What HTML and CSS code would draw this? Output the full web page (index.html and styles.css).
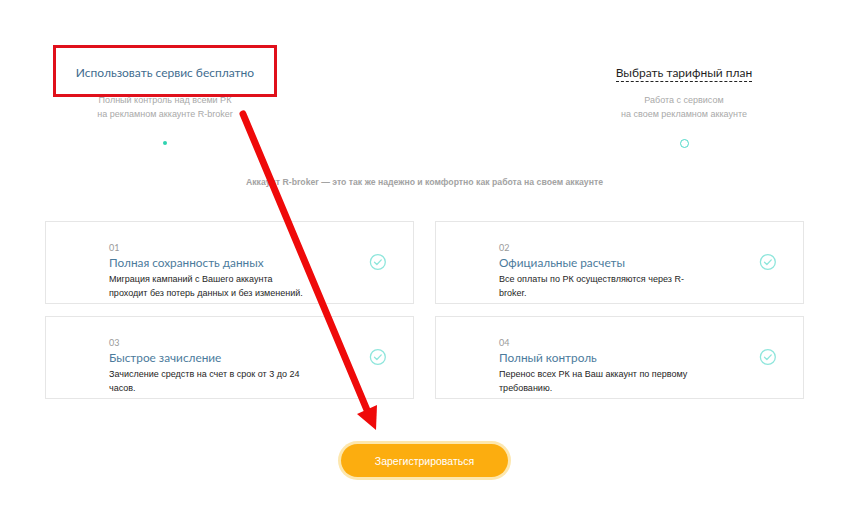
FILE: index.html
```html
<!DOCTYPE html>
<html lang="ru">
<head>
<meta charset="utf-8">
<title>R-broker</title>
<link rel="stylesheet" href="styles.css">
</head>
<body>
<div class="page">
  <section class="options">
    <div class="option">
      <div class="option-title">Использовать сервис бесплатно</div>
      <div class="option-sub">Полный контроль над всеми РК<br>на рекламном аккаунте R-broker</div>
      <div class="marker"><span class="dot"></span></div>
    </div>
    <div class="option">
      <div class="option-title"><span class="dashed">Выбрать тарифный план</span></div>
      <div class="option-sub">Работа с сервисом<br>на своем рекламном аккаунте</div>
      <div class="marker"><span class="ring"></span></div>
    </div>
  </section>

  <p class="lead">Аккаунт R-broker — это так же надежно и комфортно как работа на своем аккаунте</p>

  <section class="cards">
    <div class="card">
      <div class="card-body">
        <div class="num">01</div>
        <div class="card-title">Полная сохранность данных</div>
        <div class="card-text">Миграция кампаний с Вашего аккаунта проходит без потерь данных и без изменений.</div>
      </div>
      <svg class="check" viewBox="0 0 18 18"><circle cx="9" cy="9" r="7.6" fill="none" stroke="#8ee6dc" stroke-width="1.3"/><path d="M5.6 9.3 L8 11.5 L12.5 6.8" fill="none" stroke="#8ee6dc" stroke-width="1.3" stroke-linecap="round" stroke-linejoin="round"/></svg>
    </div>
    <div class="card">
      <div class="card-body">
        <div class="num">02</div>
        <div class="card-title">Официальные расчеты</div>
        <div class="card-text">Все оплаты по РК осуществляются через R-broker.</div>
      </div>
      <svg class="check" viewBox="0 0 18 18"><circle cx="9" cy="9" r="7.6" fill="none" stroke="#8ee6dc" stroke-width="1.3"/><path d="M5.6 9.3 L8 11.5 L12.5 6.8" fill="none" stroke="#8ee6dc" stroke-width="1.3" stroke-linecap="round" stroke-linejoin="round"/></svg>
    </div>
    <div class="card">
      <div class="card-body">
        <div class="num">03</div>
        <div class="card-title">Быстрое зачисление</div>
        <div class="card-text">Зачисление средств на счет в срок от 3 до 24 часов.</div>
      </div>
      <svg class="check" viewBox="0 0 18 18"><circle cx="9" cy="9" r="7.6" fill="none" stroke="#8ee6dc" stroke-width="1.3"/><path d="M5.6 9.3 L8 11.5 L12.5 6.8" fill="none" stroke="#8ee6dc" stroke-width="1.3" stroke-linecap="round" stroke-linejoin="round"/></svg>
    </div>
    <div class="card">
      <div class="card-body">
        <div class="num">04</div>
        <div class="card-title">Полный контроль</div>
        <div class="card-text">Перенос всех РК на Ваш аккаунт по первому требованию.</div>
      </div>
      <svg class="check" viewBox="0 0 18 18"><circle cx="9" cy="9" r="7.6" fill="none" stroke="#8ee6dc" stroke-width="1.3"/><path d="M5.6 9.3 L8 11.5 L12.5 6.8" fill="none" stroke="#8ee6dc" stroke-width="1.3" stroke-linecap="round" stroke-linejoin="round"/></svg>
    </div>
  </section>

  <div class="actions">
    <button class="register" type="button">Зарегистрироваться</button>
  </div>
</div>

<svg class="annotation" width="860" height="505" viewBox="0 0 860 505">
  <rect x="54.5" y="46.5" width="221" height="49" fill="none" stroke="#e0101b" stroke-width="3"/>
  <line x1="243" y1="114" x2="367" y2="410" stroke="#ef0a0a" stroke-width="7" stroke-linecap="round"/>
  <polygon points="376,430 377,405 357,414" fill="#ef0a0a"/>
</svg>
</body>
</html>
```

FILE: styles.css
```css
html, body {
  margin: 0;
  padding: 0;
  background: #ffffff;
}
body {
  width: 860px;
  height: 505px;
  overflow: hidden;
  position: relative;
  font-family: "Liberation Sans", Arial, sans-serif;
}
.page {
  width: 759px;
  margin-left: 45px;
  padding-top: 65px;
}
.options {
  display: flex;
  justify-content: space-between;
}
.option {
  width: 240px;
  text-align: center;
}
.option-title {
  font-family: Lato, sans-serif;
  font-size: 12px;
  line-height: 16px;
  color: #3f6d8f;
}
.option:last-child .option-title {
  color: #1f1f1f;
}
.dashed {
  border-bottom: 1px dashed #222;
  padding-bottom: 1px;
}
.option-sub {
  margin-top: 12px;
  font-size: 9px;
  line-height: 14px;
  color: #a9a9a9;
}
.marker {
  height: 10px;
  margin-top: 17px;
  display: flex;
  align-items: center;
  justify-content: center;
}
.dot {
  width: 4px;
  height: 4px;
  border-radius: 50%;
  background: #2fd3b0;
}
.ring {
  width: 7px;
  height: 7px;
  border-radius: 50%;
  border: 1px solid #4dd8c8;
}
.lead {
  margin: 28px 0 0;
  text-align: center;
  font-size: 8.7px;
  line-height: 12px;
  font-weight: bold;
  color: #a3a3a3;
}
.cards {
  margin-top: 33px;
  display: grid;
  grid-template-columns: 369px 369px;
  column-gap: 21px;
  row-gap: 12px;
}
.card {
  height: 81px;
  border: 1px solid #e6e6e6;
  display: flex;
  align-items: center;
  justify-content: space-between;
  padding: 0 26px 0 63px;
}
.card-body {
  align-self: flex-start;
  padding-top: 19px;
  width: 265px;
}
.num {
  font-family: Lato, sans-serif;
  font-size: 9px;
  line-height: 13px;
  color: #9a9a9a;
}
.card-title {
  font-family: Lato, sans-serif;
  font-size: 11.8px;
  line-height: 18px;
  color: #4b7b9c;
}
.card-text {
  font-size: 9px;
  line-height: 14px;
  color: #1e1e1e;
  width: 197px;
}
.check {
  width: 18px;
  height: 18px;
  margin-top: -2px;
}
.actions {
  margin-top: 45px;
  display: flex;
  justify-content: center;
}
.register {
  width: 167px;
  height: 33px;
  border: none;
  border-radius: 17px;
  background: #fcad0f;
  box-shadow: 0 0 0 3px #fde7ae;
  color: #ffffff;
  font-family: "Liberation Sans", Arial, sans-serif;
  font-size: 10.5px;
  padding: 0;
}
.annotation {
  position: absolute;
  left: 0;
  top: 0;
  pointer-events: none;
}
```
